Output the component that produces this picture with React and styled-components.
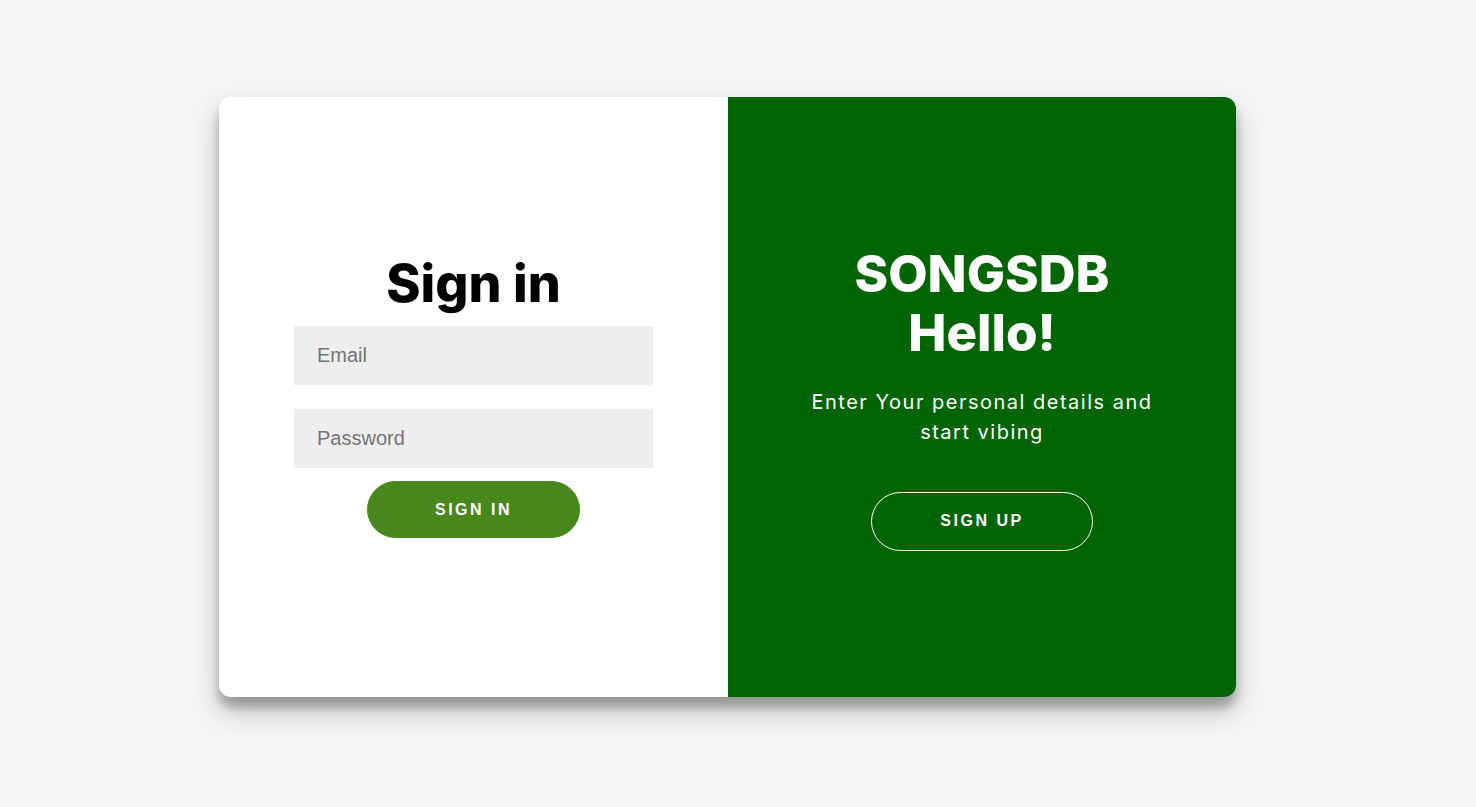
import styled, { createGlobalStyle } from "styled-components"

const Global = createGlobalStyle`
    * { box-sizing: border-box; }
    body {
        margin: 0;
        background: #f6f5f7;
        font-family: 'Inter', 'Liberation Sans', sans-serif;
    }
`

export default function App() {
    return (
        <>
            <Global />
            <Page>
                <Card>
                    <FormSide>
                        <Title>Sign in</Title>
                        <Input type="email" placeholder="Email" />
                        <Input type="password" placeholder="Password" />
                        <Button>Sign In</Button>
                    </FormSide>
                    <Overlay>
                        <Title light>SONGSDB<br />Hello!</Title>
                        <Text>Enter Your personal details and start vibing</Text>
                        <Button ghost>Sign Up</Button>
                    </Overlay>
                </Card>
            </Page>
        </>
    )
}

const Page = styled.div`
    height: 807px;
    display: flex;
    justify-content: center;
    align-items: center;
    padding: 0 21px 13px 0;
`
const Card = styled.div`
    width: 1017px;
    height: 600px;
    display: grid;
    grid-template-columns: 509px 508px;
    background: #fff;
    border-radius: 12px;
    overflow: hidden;
    box-shadow: 0 14px 28px rgba(0,0,0,0.25), 0 10px 10px rgba(0,0,0,0.22);
`
const FormSide = styled.form`
    display: flex;
    flex-direction: column;
    justify-content: center;
    align-items: center;
    padding: 0 75px 4px;
`
const Overlay = styled.div`
    background: #006400;
    color: #fff;
    display: flex;
    flex-direction: column;
    justify-content: center;
    align-items: center;
    text-align: center;
    padding: 0 60px;
`
const Title = styled.h1`
    margin: ${p => p.light ? "0 0 12px" : "0 0 10px"};
    font-family: 'Inter', sans-serif;
    font-weight: 800;
    font-size: ${p => p.light ? "51px" : "52px"};
    line-height: ${p => p.light ? "59px" : "64px"};
    color: ${p => p.light ? "#fff" : "#000"};
`
const Text = styled.p`
    margin: 13px 0 45px;
    font-family: 'Inter', sans-serif;
    font-weight: 400;
    font-size: 20px;
    line-height: 30px;
    letter-spacing: 1.5px;
`
const Input = styled.input`
    width: 100%;
    height: 59px;
    border: none;
    outline: none;
    background: #eee;
    padding: 0 23px;
    margin-bottom: 24px;
    font-family: 'Liberation Sans', Arial, sans-serif;
    font-size: 20px;
    &::placeholder { color: #757575; }
    &:last-of-type { margin-bottom: 13px; }
`
const Button = styled.button`
    width: ${p => p.ghost ? "222px" : "213px"};
    height: ${p => p.ghost ? "59px" : "57px"};
    border-radius: 30px;
    border: 1px solid ${p => p.ghost ? "#fff" : "#47871b"};
    background: ${p => p.ghost ? "transparent" : "#47871b"};
    color: #fff;
    font-family: 'Liberation Sans', Arial, sans-serif;
    font-weight: 700;
    font-size: 16px;
    letter-spacing: 2.5px;
    text-transform: uppercase;
    padding: 0;
`
